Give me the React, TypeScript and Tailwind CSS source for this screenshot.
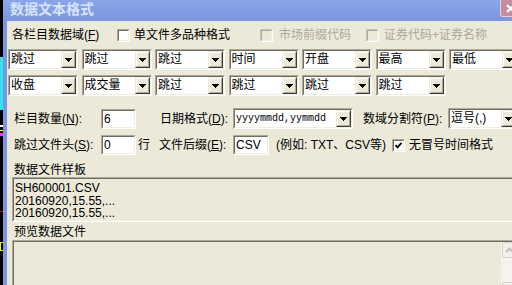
import type { ReactNode } from 'react';

const sans = "font-['Liberation_Sans','Noto_Sans_CJK_SC',sans-serif]";

// classic sunken 2px frame (edit boxes, combos, checkboxes)
function Sunken({ className = '', bg = 'bg-white', light = false, children }: { className?: string; bg?: string; light?: boolean; children?: ReactNode }) {
    const outer = light ? 'border-t-[#c9c6ba] border-l-[#c9c6ba]' : 'border-t-[#aca899] border-l-[#aca899]';
    const inner = light ? 'border-t-[#aca899] border-l-[#aca899]' : 'border-t-[#716f64] border-l-[#716f64]';
    return (
        <div className={`border border-b-white border-r-white ${outer} ${className}`}>
            <div className={`h-full border border-b-[#f1efe2] border-r-[#f1efe2] ${inner} ${bg}`}>{children}</div>
        </div>
    );
}

function Arrow() {
    return (
        <div className="w-[15px] h-full shrink-0 border border-t-[#ece9d8] border-l-[#ece9d8] border-b-[#404040] border-r-[#404040] bg-[#ece9d8]">
            <div className="h-full flex items-center justify-center border border-t-white border-l-white border-b-[#aca899] border-r-[#aca899]">
                <svg width="7" height="4" viewBox="0 0 7 4" shapeRendering="crispEdges">
                    <path d="M0 0h7v1h-1v1h-1v1h-1v1h-1v-1h-1v-1h-1v-1h-1z" fill="#000" />
                </svg>
            </div>
        </div>
    );
}

function Combo({ value, w = 'w-[70px]', font = sans, size = 'text-[12px]' }: { value: string; w?: string; font?: string; size?: string }) {
    return (
        <Sunken className={`${w} h-[21px] shrink-0`}>
            <div className="flex h-full">
                <span className={`flex-1 pl-px leading-[17px] whitespace-nowrap overflow-hidden ${size} ${font}`}>{value}</span>
                <Arrow />
            </div>
        </Sunken>
    );
}

function Edit({ value, w }: { value: string; w: string }) {
    return (
        <Sunken className={`${w} h-[20px] shrink-0`}>
            <span className="block pl-px text-[12px] leading-[16px]">{value}</span>
        </Sunken>
    );
}

function Check({ checked = false, disabled = false }: { checked?: boolean; disabled?: boolean }) {
    return (
        <Sunken className="w-[13px] h-[13px] shrink-0" bg={disabled ? 'bg-[#ece9d8]' : 'bg-white'} light={disabled}>
            {checked && (
                <svg width="9" height="9" viewBox="0 0 9 9" className="block">
                    <path d="M1.5 4.2l2 2.2 4-4.6" fill="none" stroke="#000" strokeWidth="1.8" />
                </svg>
            )}
        </Sunken>
    );
}

// label with underlined access key, e.g. 栏目数量(N):
function Label({ text, k, tail = '', w }: { text: string; k: string; tail?: string; w: string }) {
    return (
        <span className={`${w} shrink-0 text-[12px] leading-[16px] whitespace-nowrap`}>
            {text}(<span className="underline">{k}</span>){tail}
        </span>
    );
}

function ScrollBtn({ up }: { up?: boolean }) {
    return (
        <div className="mx-px w-[15px] h-[16px] rounded-[2px] border border-[#d6d3c8] bg-[#f1f0ea] flex items-center justify-center">
            <svg width="9" height="6" viewBox="0 0 9 6">
                <path d={up ? 'M1 5l3.5-3.5L8 5' : 'M1 1l3.5 3.5L8 1'} fill="none" stroke="#c2c0b6" strokeWidth="2" />
            </svg>
        </div>
    );
}

function Desktop() {
    return (
        <svg width="3" height="285" className="shrink-0 block">
            <rect x="0" y="0" width="3" height="285" fill="#000" />
            <rect x="0" y="57" width="3" height="53" fill="#2fe4ec" />
            <rect x="0" y="125" width="3" height="2" fill="#ffffff" />
            <rect x="0" y="130" width="3" height="1" fill="#ffff00" />
            <rect x="0" y="133" width="3" height="3" fill="#ff30ff" />
            <rect x="0" y="211" width="3" height="1" fill="#d01010" />
            <rect x="0.5" y="242.5" width="3" height="8" fill="none" stroke="#f0f000" />
        </svg>
    );
}

function App() {
    const row1 = ['跳过', '跳过', '跳过', '时间', '开盘', '最高', '最低'];
    const row2 = ['收盘', '成交量', '跳过', '跳过', '跳过', '跳过'];

    return (
        <div className={`w-[512px] h-[285px] overflow-hidden bg-black flex text-black ${sans}`}>
            <Desktop />
            <div className="w-[523px] shrink-0 flex flex-col bg-[#7b97df]">
                {/* title bar */}
                <div className="h-[21px] shrink-0 flex bg-gradient-to-b from-[#8aa6e9] to-[#7a97df]">
                    <span className="pl-[7px] text-[14px] font-bold leading-[18px] text-[#d8e4f8] whitespace-nowrap">数据文本格式</span>
                    <div className="ml-auto mr-[5px] w-[21px] h-[17px] shrink-0 rounded-b-[3px] border border-t-0 border-[#e6cfd6] bg-[#c48d9b] flex items-center justify-center">
                        <svg width="9" height="9" viewBox="0 0 9 9">
                            <path d="M1 1l7 7M8 1l-7 7" stroke="#fff" strokeWidth="2" />
                        </svg>
                    </div>
                </div>

                <div className="flex-1 mx-[4px] bg-[#ece9d8] flex flex-col">
                    {/* 数据域 row */}
                    <div className="mt-[6px] h-[16px] pl-[5px] flex items-center">
                        <Label text="各栏目数据域" k="F" w="w-[105px]" />
                        <Check />
                        <span className="ml-[4px] w-[126px] shrink-0 text-[12px] leading-[16px] whitespace-nowrap">单文件多品种格式</span>
                        <Check disabled />
                        <span className="ml-[6px] w-[87px] shrink-0 text-[12px] leading-[16px] whitespace-nowrap text-[#aca899]">市场前缀代码</span>
                        <Check disabled />
                        <span className="ml-[5px] text-[12px] leading-[16px] whitespace-nowrap text-[#aca899]">证券代码+证券名称</span>
                    </div>

                    <div className="mt-[6px] pl-px flex gap-[3.5px]">
                        {row1.map((v, i) => (
                            <Combo key={i} value={v} />
                        ))}
                    </div>
                    <div className="mt-[5px] pl-px flex gap-[3.5px]">
                        {row2.map((v, i) => (
                            <Combo key={i} value={v} />
                        ))}
                    </div>

                    {/* 栏目数量 row */}
                    <div className="mt-[12px] h-[21px] pl-[7px] flex items-center">
                        <Label text="栏目数量" k="N" tail=":" w="w-[87px]" />
                        <Edit value="6" w="w-[35px]" />
                        <Label text="日期格式" k="D" tail=":" w="ml-[24px] w-[73px]" />
                        <Combo value="yyyymmdd,yymmdd" w="w-[120px]" font="font-['Liberation_Mono',monospace]" size="text-[10px] pl-[2px]" />
                        <Label text="数域分割符" k="P" tail=":" w="ml-[10px] w-[85px]" />
                        <Combo value="逗号(,)" w="w-[70px]" />
                    </div>

                    {/* 跳过文件头 row */}
                    <div className="mt-[6px] h-[20px] pl-[7px] flex items-center">
                        <Label text="跳过文件头" k="S" tail=":" w="w-[87px]" />
                        <Edit value="0" w="w-[35px]" />
                        <span className="ml-[2px] w-[12px] shrink-0 text-[12px] leading-[16px]">行</span>
                        <Label text="文件后缀" k="E" tail=":" w="ml-[9px] w-[74px]" />
                        <Edit value="CSV" w="w-[36px]" />
                        <span className="ml-[7px] w-[116px] shrink-0 text-[12px] leading-[16px] whitespace-nowrap">(例如: TXT、CSV等)</span>
                        <Check checked />
                        <span className="ml-[4px] text-[12px] leading-[16px] whitespace-nowrap">无冒号时间格式</span>
                    </div>

                    <div className="mt-[8px] h-[14px] pl-[7px] text-[12px] leading-[14px]">数据文件样板</div>
                    <Sunken className="ml-[5px] w-[508px] h-[45px] shrink-0" bg="bg-[#ece9d8]">
                        <div className="pl-px pt-[3px] text-[12px] leading-[12.5px] font-['Liberation_Sans',sans-serif]">
                            <div>SH600001.CSV</div>
                            <div>20160920,15.55,...</div>
                            <div>20160920,15.55,...</div>
                        </div>
                    </Sunken>

                    <div className="mt-[2px] h-[16px] pl-[7px] text-[12px] leading-[16px]">预览数据文件</div>
                    <Sunken className="ml-[5px] w-[508px] h-[60px] shrink-0" bg="bg-[#ece9d8]">
                        <div className="h-full flex justify-end">
                            <div className="w-[17px] h-full bg-[#f4f3ee] flex flex-col justify-between">
                                <ScrollBtn up />
                                <ScrollBtn />
                            </div>
                        </div>
                    </Sunken>
                </div>
            </div>
        </div>
    );
}

export default App;
